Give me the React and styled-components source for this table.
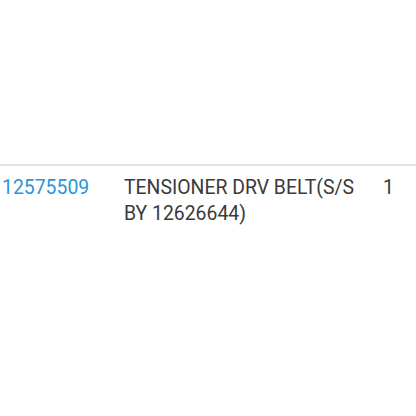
import React from "react";
import styled, { createGlobalStyle } from "styled-components";

const Global = createGlobalStyle`
  html, body { margin: 0; padding: 0; background: #fff; }
  body { font-family: Roboto, "Noto Sans", sans-serif; }
`;

const Page = styled.div`
  width: 416px;
  height: 416px;
  overflow: hidden;
  padding-top: 164px;
  box-sizing: border-box;
`;

const Row = styled.div`
  display: grid;
  grid-template-columns: 122px 259px 1fr;
  border-top: 2px solid #e3e3e3;
  padding: 8.5px 0 0 2px;
  font-size: 19.4px;
  line-height: 26px;
  color: #3a3a3a;
`;

const PartLink = styled.a`
  color: #2a95d9;
  text-decoration: none;
`;

const Cell = styled.div`
  padding-right: ${(p) => p.$pr || 0}px;
`;

export default function App() {
  return (
    <>
      <Global />
      <Page>
        <Row>
          <Cell>
            <PartLink href="#">12575509</PartLink>
          </Cell>
          <Cell $pr={16}>TENSIONER DRV BELT(S/S BY 12626644)</Cell>
          <Cell>1</Cell>
        </Row>
      </Page>
    </>
  );
}
